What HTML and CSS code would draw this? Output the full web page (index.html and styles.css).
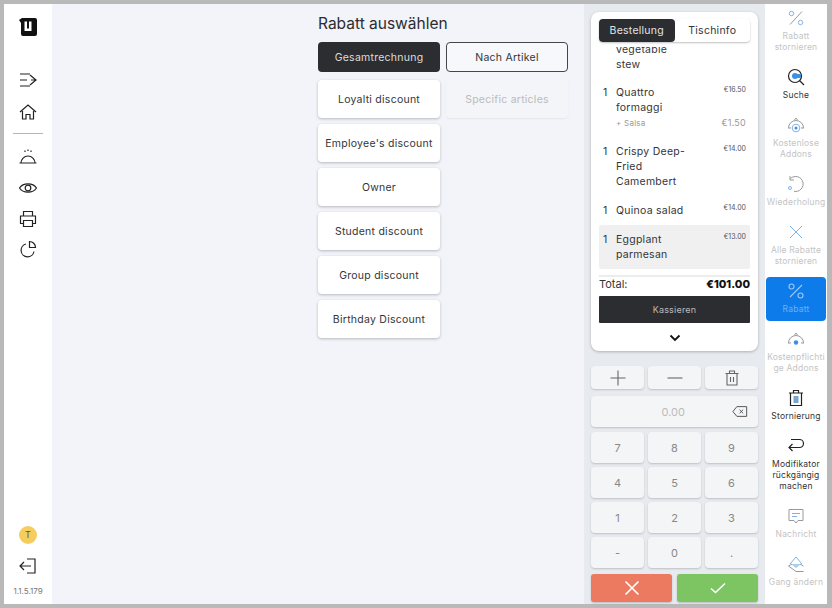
FILE: index.html
```html
<!DOCTYPE html>
<html lang="de">
<head>
  <meta charset="UTF-8" />
  <title>Rabatt auswählen</title>
  <link rel="stylesheet" href="styles.css">
</head>
<body>
  <div class="frame">
    <!-- LEFT NAV -->
    <nav class="nav">
      <svg class="logo" viewBox="0 0 18 18"><path d="M3 0H16a2 2 0 0 1 2 2V16a2 2 0 0 1-2 2H4a2 2 0 0 1-2-2V5L0 2Z" fill="#111"/><path d="M5.500 3.500H8V10.500H10V3.500H12.500V13H5.500Z" fill="#fff"/></svg>
      <svg class="nav-icon first" viewBox="0 0 20 20"><path d="M2 4H12M2 10H9M2 16H12M12 5L18 10L12 15M13 10H18"/></svg>
      <svg class="nav-icon" viewBox="0 0 20 20"><path d="M2 10L10 3L18 10M4.500 9V17H8V12.500H12V17H15.500V9"/></svg>
      <div class="nav-line"></div>
      <svg class="nav-icon" viewBox="0 0 20 20"><path d="M3 16A7 7 0 0 1 17 16ZM1.500 16H18.500M7 3.500V5M10 2.500V4M13 3.500V5"/></svg>
      <svg class="nav-icon gap" viewBox="0 0 20 20"><path d="M1.500 10C5 4.500 15 4.500 18.500 10C15 15.500 5 15.500 1.500 10Z"/><circle cx="10" cy="10" r="2.800"/></svg>
      <svg class="nav-icon gap" viewBox="0 0 20 20"><path d="M5.500 7V2.500H14.500V7M5.500 14.500H2.500V7H17.500V14.500H14.500M5.500 11.500H14.500V17.500H5.500Z"/></svg>
      <svg class="nav-icon gap pie" viewBox="0 0 20 20"><path d="M8 5A6.500 6.500 0 1 0 16 12.500M11.500 2.500V8.500H17.500A6 6 0 0 0 11.500 2.500Z"/></svg>
      <div class="nav-bottom">
        <div class="avatar">T</div>
        <svg class="nav-icon" viewBox="0 0 20 20"><path d="M9 3H17V17H9M13 10H2M6 6L2 10L6 14"/></svg>
        <div class="version">1.1.5.179</div>
      </div>
    </nav>

    <!-- DISCOUNTS -->
    <main class="main">
      <h1>Rabatt auswählen</h1>
      <div class="discounts">
        <button class="disc dark">Gesamtrechnung</button>
        <button class="disc outline">Nach Artikel</button>
        <div class="disc-col">
          <button class="disc card">Loyalti discount</button>
          <button class="disc card">Employee's discount</button>
          <button class="disc card">Owner</button>
          <button class="disc card">Student discount</button>
          <button class="disc card">Group discount</button>
          <button class="disc card">Birthday Discount</button>
        </div>
        <div class="disc-col">
          <button class="disc card off">Specific articles</button>
        </div>
      </div>
    </main>

    <!-- ORDER -->
    <section class="order">
      <div class="order-card">
        <div class="tabs">
          <div class="tab active">Bestellung</div>
          <div class="tab">Tischinfo</div>
        </div>
        <div class="items">
          <div class="item clipped">
            <span class="qty"></span>
            <div class="name">vegetable<br>stew</div>
          </div>
          <div class="item with-mod">
            <span class="qty">1</span>
            <div class="name">Quattro<br>formaggi</div>
            <span class="price">€16.50</span>
            <div class="mod"><span>+ Salsa</span><span>€1.50</span></div>
          </div>
          <div class="item">
            <span class="qty">1</span>
            <div class="name">Crispy Deep-<br>Fried<br>Camembert</div>
            <span class="price">€14.00</span>
          </div>
          <div class="item">
            <span class="qty">1</span>
            <div class="name">Quinoa salad</div>
            <span class="price">€14.00</span>
          </div>
          <div class="item selected">
            <span class="qty">1</span>
            <div class="name">Eggplant<br>parmesan</div>
            <span class="price">€13.00</span>
          </div>
        </div>
        <div class="total"><span>Total:</span><b>€101.00</b></div>
        <button class="pay">Kassieren</button>
        <svg class="chevron" viewBox="0 0 12 8"><path d="M1.500 1.500L6 6L10.500 1.500"/></svg>
      </div>

      <div class="qty-row">
        <button class="key small"><svg viewBox="0 0 18 18"><path d="M9 1.500V16.500M1.500 9H16.500"/></svg></button>
        <button class="key small"><svg viewBox="0 0 18 18"><path d="M1.500 9H16.500"/></svg></button>
        <button class="key small"><svg viewBox="0 0 18 18"><path d="M2.500 4.500H15.500M6.500 4.500V2H11.500V4.500M4 4.500V16H14V4.500M7.500 8V13M10.500 8V13"/></svg></button>
      </div>
      <div class="display">
        <span>0.00</span>
        <svg viewBox="0 0 18 14"><path d="M5.500 1.500H16.500V12.500H5.500L1 7ZM8.500 5L12.500 9M12.500 5L8.500 9"/></svg>
      </div>
      <div class="numpad">
        <button class="key">7</button><button class="key">8</button><button class="key">9</button>
        <button class="key">4</button><button class="key">5</button><button class="key">6</button>
        <button class="key">1</button><button class="key">2</button><button class="key">3</button>
        <button class="key">-</button><button class="key">0</button><button class="key">.</button>
      </div>
      <div class="actions">
        <button class="act cancel"><svg viewBox="0 0 16 16"><path d="M1.500 1.500L14.500 14.500M14.500 1.500L1.500 14.500"/></svg></button>
        <button class="act ok"><svg viewBox="0 0 16 12"><path d="M1 6.500L5.500 10.500L15 1.500"/></svg></button>
      </div>
    </section>

    <!-- RIGHT RAIL -->
    <aside class="rail">
      <div class="rail-item off">
        <svg viewBox="0 0 18 18"><path class="g" d="M15 2.500L3 15.500"/><circle class="b" cx="4.500" cy="4.500" r="2.200"/><circle class="b" cx="13.500" cy="13.500" r="2.200"/></svg>
        <span>Rabatt<br>stornieren</span>
      </div>
      <div class="rail-item">
        <svg viewBox="0 0 18 18"><circle class="k" cx="8" cy="8" r="6.500"/><path class="k" d="M12.500 12.500L17 17"/><circle class="fill" cx="8" cy="8" r="3"/><path class="fill" d="M8 6H14V10H8Z"/></svg>
        <span>Suche</span>
      </div>
      <div class="rail-item off">
        <svg viewBox="0 0 18 18"><path class="g" d="M1.500 12A7.500 7.500 0 0 1 16.500 12M1 12H4M14 12H17M7.500 4L9 2L10.500 4"/><circle class="b" cx="9" cy="12" r="3.800"/><circle class="fill" cx="9" cy="12" r="1.500"/></svg>
        <span>Kostenlose<br>Addons</span>
      </div>
      <div class="rail-item off">
        <svg viewBox="0 0 18 18"><path class="g" d="M3.500 3.500A7.500 7.500 0 1 1 7 16.300M3 1V5H7"/><circle class="b" cx="3" cy="13" r="1.500"/></svg>
        <span>Wiederholung</span>
      </div>
      <div class="rail-item off">
        <svg viewBox="0 0 18 18"><path class="b" d="M3 3L15 15M15 3L3 15"/></svg>
        <span>Alle Rabatte<br>stornieren</span>
      </div>
      <div class="rail-item active">
        <svg viewBox="0 0 18 18"><path d="M15 3L3 15"/><circle cx="4.500" cy="4.500" r="2.500"/><circle cx="13.500" cy="13.500" r="2.500"/></svg>
        <span>Rabatt</span>
      </div>
      <div class="rail-item off">
        <svg viewBox="0 0 18 18"><path class="g" d="M1.500 13A7.500 7.500 0 0 1 16.500 13M1 13H4M14 13H17M7.500 5L9 3L10.500 5"/><circle class="fill" cx="9" cy="12.500" r="2.200"/></svg>
        <span>Kostenpflichti<br>ge Addons</span>
      </div>
      <div class="rail-item">
        <svg viewBox="0 0 18 18"><path class="k" d="M2 4H16M6.500 4V1.500H11.500V4M3.500 4V16.500H14.500V4"/><path class="fill-bar" d="M6.500 7H11.500V14H6.500Z"/></svg>
        <span>Stornierung</span>
      </div>
      <div class="rail-item">
        <svg viewBox="0 0 18 18"><path class="k" d="M4 2.500H12.500A4 4 0 0 1 12.500 10.500H2M5.500 7L2 10.500L5.500 14"/></svg>
        <span>Modifikator<br>rückgängig<br>machen</span>
      </div>
      <div class="rail-item off">
        <svg viewBox="0 0 18 18"><path class="g" d="M2 2.500H16V13.500H11L9 16L7 13.500H2Z"/><path class="b" d="M5 6.500H13M5 9.500H10"/></svg>
        <span>Nachricht</span>
      </div>
      <div class="rail-item off">
        <svg viewBox="0 0 18 18"><path class="b" d="M3 9L9 2L15 9"/><path class="fill-soft" d="M4 9H14L9 13Z"/><path class="g" d="M1.500 11L9 16.500H16.500M1.500 11L5 9M16.500 11L13 9"/></svg>
        <span>Gang ändern</span>
      </div>
    </aside>
  </div>
</body>
</html>
```

FILE: styles.css
```css
* {
  box-sizing: border-box;
  font-family: 'Inter', sans-serif;
}

body {
  margin: 0;
  width: 832px;
  height: 608px;
  overflow: hidden;
}

button {
  border: none;
  padding: 0;
  cursor: pointer;
}

svg {
  fill: none;
}

.frame {
  width: 832px;
  height: 608px;
  border: 4px solid #b9b9b9;
  border-right-width: 5px;
  display: flex;
  background: #f2f4f9;
}

/* left nav */
.nav {
  width: 48px;
  flex: none;
  background: #fff;
  display: flex;
  flex-direction: column;
  align-items: center;
  padding-top: 14px;
}

.logo {
  width: 18px;
  height: 18px;
}

.nav-icon {
  width: 20px;
  height: 20px;
  stroke: #222;
  stroke-width: 1.2;
}

.nav-icon.first {
  margin-top: 34px;
  margin-bottom: 12px;
}

.nav-icon.gap {
  margin-top: 11px;
}

.nav-icon.pie {
  margin-top: 10px;
}

.nav-line {
  width: 30px;
  height: 1px;
  background: #b5b5b5;
  margin: 11px 0 13px;
}

.nav-bottom {
  margin-top: auto;
  display: flex;
  flex-direction: column;
  align-items: center;
  padding-bottom: 8px;
}

.avatar {
  width: 18px;
  height: 18px;
  border-radius: 50%;
  background: #f5cd5f;
  color: #555;
  font-size: 9px;
  line-height: 18px;
  text-align: center;
  margin-bottom: 12px;
}

.version {
  font-size: 8px;
  color: #777;
  margin-top: 10px;
  line-height: 10px;
}

/* discounts */
.main {
  flex: 1;
  padding-left: 266px;
}

h1 {
  margin: 10px 0 9px;
  font-size: 15.500px;
  font-weight: 400;
  line-height: 19px;
  color: #2b2d31;
}

.discounts {
  display: grid;
  grid-template-columns: 122px 122px;
  column-gap: 6px;
  row-gap: 8px;
}

.disc {
  height: 30px;
  font-size: 10.500px;
  letter-spacing: 0.25px;
  color: #33353a;
  border-radius: 4px;
}

.disc.dark {
  background: #2b2d31;
  color: #ddd;
}

.disc.outline {
  background: #f6f8fc;
  border: 1px solid #44464a;
}

.disc-col {
  display: flex;
  flex-direction: column;
  gap: 6px;
}

.disc.card {
  height: 38px;
  background: #fff;
  box-shadow: 0 1px 3px rgba(0,0,0,0.25);
}

.disc.card.off {
  background: #f3f5f9;
  color: #bbb;
  box-shadow: 0 1px 2px rgba(0,0,0,0.06);
}

/* order panel */
.order {
  width: 181px;
  flex: none;
  background: #e7eaef;
  padding: 8px 7px 0;
}

.order-card {
  height: 339px;
  background: #fff;
  border-radius: 8px;
  box-shadow: 0 1px 3px rgba(0,0,0,0.25);
  padding: 7px 8px 0;
  display: flex;
  flex-direction: column;
}

.tabs {
  display: flex;
  height: 23px;
  flex: none;
  border-radius: 4px;
  box-shadow: 0 1px 2px rgba(0,0,0,0.25);
  background: #fff;
}

.tab {
  flex: 1;
  font-size: 10.500px;
  line-height: 23px;
  text-align: center;
  letter-spacing: 0.25px;
  color: #33353a;
}

.tab.active {
  background: #2b2d31;
  color: #e4e4e4;
  border-radius: 4px;
}

/* list scrolled a bit, top row is cut by the edge */
.items {
  height: 222px;
  margin-top: 5px;
  flex: none;
  overflow: hidden;
}

.item {
  display: grid;
  grid-template-columns: 13px 1fr 32px;
  padding: 7px 4px;
  font-size: 10.500px;
  line-height: 15px;
  letter-spacing: 0.25px;
  color: #33353a;
}

.item.clipped {
  margin-top: -5.500px;
  padding-top: 0;
  padding-bottom: 6px;
}

.item.with-mod {
  padding-bottom: 6px;
}

.item.selected {
  background: #f0f0f0;
  border-radius: 2px;
}

.price {
  font-size: 7px;
  line-height: 10px;
  text-align: right;
  letter-spacing: 0;
  color: #555;
}

.mod {
  grid-column: 2 / 4;
  display: flex;
  justify-content: space-between;
  font-size: 8px;
  line-height: 16px;
  color: #999;
}

.mod span:last-child {
  font-size: 9px;
}

.total {
  flex: none;
  margin-top: 6px;
  border-top: 2px solid #ececec;
  display: flex;
  justify-content: space-between;
  font-size: 11px;
  line-height: 15px;
  height: 21px;
  color: #33353a;
}

.total b {
  font-weight: 800;
  font-size: 11px;
  color: #111;
}

.pay {
  flex: none;
  height: 27px;
  background: #2b2d31;
  color: #bbb;
  font-size: 9px;
  letter-spacing: 0.2px;
  border-radius: 1px;
}

.chevron {
  width: 12px;
  height: 8px;
  margin: 11px auto 0;
  stroke: #111;
  stroke-width: 1.8;
  flex: none;
}

.qty-row {
  display: grid;
  grid-template-columns: repeat(3, 1fr);
  gap: 4px;
  margin-top: 15px;
}

.key {
  height: 31px;
  background: #f4f5f7;
  color: #888;
  font-size: 11px;
  border-radius: 4px;
  box-shadow: 0 1px 2px rgba(0,0,0,0.18);
}

.key.small {
  height: 23px;
  display: flex;
  align-items: center;
  justify-content: center;
}

.key svg {
  width: 18px;
  height: 18px;
  stroke: #666;
  stroke-width: 1.1;
}

.display {
  height: 31px;
  margin-top: 7px;
  background: #f4f5f7;
  border-radius: 4px;
  box-shadow: 0 1px 2px rgba(0,0,0,0.18);
  display: flex;
  align-items: center;
  justify-content: flex-end;
  padding-right: 10px;
  color: #bbb;
  font-size: 11px;
}

.display span {
  margin-right: 47px;
}

.display svg {
  width: 16px;
  height: 13px;
  stroke: #555;
  stroke-width: 1.1;
}

.numpad {
  display: grid;
  grid-template-columns: repeat(3, 1fr);
  gap: 4px;
  margin-top: 5px;
}

.actions {
  display: grid;
  grid-template-columns: 1fr 1fr;
  gap: 5px;
  margin-top: 6px;
}

.act {
  height: 28px;
  border-radius: 3px;
  box-shadow: 0 1px 2px rgba(0,0,0,0.2);
  display: flex;
  align-items: center;
  justify-content: center;
}

.act svg {
  width: 16px;
  height: 16px;
  stroke: #fff;
  stroke-width: 1.6;
}

.cancel {
  background: #ec7a60;
}

.ok {
  background: #7cc562;
}

/* right rail */
.rail {
  width: 62px;
  flex: none;
  background: #fff;
  display: flex;
  flex-direction: column;
  gap: 4.500px;
  padding: 0 1px;
}

.rail-item {
  padding: 5px 0 6px;
  text-align: center;
  font-size: 8.500px;
  line-height: 11px;
  color: #333;
  letter-spacing: 0.2px;
  white-space: nowrap;
}

.rail-item svg {
  display: block;
  width: 18px;
  height: 18px;
  margin: 0 auto 3.500px;
}

.rail-item .g {
  stroke: #999;
  stroke-width: 1;
}

.rail-item .b {
  stroke: #7fb2ea;
  stroke-width: 1;
}

.rail-item .k {
  stroke: #222;
  stroke-width: 1.2;
}

.rail-item .fill {
  fill: #3d8fe8;
}

.rail-item .fill-soft {
  fill: #a9cdf2;
}

.rail-item .fill-bar {
  fill: #7aa4cf;
}

.rail-item.off {
  color: #c4c4c4;
}

.rail-item.active {
  background: #0d7bea;
  color: #6eb0f5;
  border-radius: 4px;
}

.rail-item.active svg {
  stroke: #9cc9f7;
  stroke-width: 1.1;
}
```
